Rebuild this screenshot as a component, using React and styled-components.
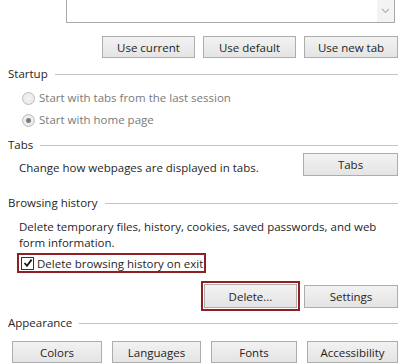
import React from 'react';
import styled, { createGlobalStyle } from 'styled-components';

const GlobalStyle = createGlobalStyle`
  html, body {
    margin: 0;
    padding: 0;
    background: #ffffff;
  }
  body {
    font-family: "Open Sans", "Noto Sans", "Liberation Sans", sans-serif;
    font-size: 11.5px;
    color: #1f1f1f;
  }
`;

const Page = styled.div`
  width: 411px;
  height: 363px;
  overflow: hidden;
  box-sizing: border-box;
  padding: 0 13px 0 8px;
  display: flex;
  flex-direction: column;
`;

const HomeBox = styled.div`
  margin-left: 58px;
  margin-right: 3px;
  height: 23px;
  box-sizing: border-box;
  border: 1px solid #a9a9a9;
  border-top: none;
  display: flex;
  justify-content: flex-end;
`;

const ScrollTrack = styled.div`
  width: 17px;
  background: #f3f3f3;
  display: flex;
  align-items: center;
  justify-content: center;
  color: #b8b8b8;
`;

const Row = styled.div`
  display: flex;
  align-items: ${(p) => p.$align || 'center'};
  justify-content: ${(p) => p.$justify || 'flex-end'};
  gap: ${(p) => p.$gap || 8}px;
  margin-top: ${(p) => p.$mt || 0}px;
  padding-left: ${(p) => p.$pl || 0}px;
`;

const Button = styled.button`
  font: inherit;
  color: #1f1f1f;
  width: ${(p) => p.$w || 93}px;
  height: ${(p) => p.$h || 22}px;
  padding: 0;
  box-sizing: border-box;
  border: 1px solid #adadad;
  border-radius: 0;
  background: linear-gradient(#f2f2f2, #e4e4e4);
  text-align: center;
`;

const Highlight = styled.div`
  border: 2px solid #8e2024;
  padding: ${(p) => p.$pad || '1px'};
  display: flex;
  align-items: center;
`;

const Header = styled.div`
  display: flex;
  align-items: center;
  gap: 7px;
  height: 16px;
  line-height: 16px;
  margin-top: ${(p) => p.$mt || 0}px;
  color: #262626;
`;

const HeaderLine = styled.div`
  flex: 1;
  height: 1px;
  background: #c4c4c4;
`;

const RadioRow = styled.label`
  display: flex;
  align-items: center;
  gap: 4px;
  height: 16px;
  line-height: 16px;
  margin-top: ${(p) => p.$mt || 0}px;
  padding-left: 14px;
  color: #7a7a7a;
`;

const RadioCircle = styled.span`
  width: 11px;
  height: 11px;
  border-radius: 50%;
  border: 1px solid #bcbcbc;
  background: radial-gradient(circle, #f4f4f4, #e6e6e6);
  display: flex;
  align-items: center;
  justify-content: center;

  &::after {
    content: '';
    display: ${(p) => (p.$checked ? 'block' : 'none')};
    width: 5px;
    height: 5px;
    border-radius: 50%;
    background: #7d7d7d;
  }
`;

const Text = styled.div`
  padding-left: 11px;
  line-height: 16px;
  margin-top: ${(p) => p.$mt || 0}px;
  flex: ${(p) => (p.$grow ? 1 : 'none')};
`;

const CheckWrap = styled.div`
  margin-left: 9px;
  align-self: flex-start;
  margin-top: 2px;
  border: 2px solid #8e2024;
  height: 20px;
  box-sizing: border-box;
  width: 189px;
  display: flex;
  align-items: center;
  gap: 3px;
  padding-left: 2px;
`;

const CheckBox = styled.span`
  width: 11px;
  height: 11px;
  border: 1px solid #333;
  background: #fff;
  display: flex;
  align-items: center;
  justify-content: center;
`;

const Grid = styled.div`
  display: grid;
  grid-template-columns: 90px 89px 86px 91px;
  gap: 10px;
  justify-content: end;
  margin-top: 10px;
`;

export default function App() {
  return (
    <>
      <GlobalStyle />
      <Page>
        <HomeBox>
          <ScrollTrack>
            <svg width="9" height="6" viewBox="0 0 9 6">
              <path d="M1 1 L4.5 4.5 L8 1" fill="none" stroke="#b4b4b4" strokeWidth="1.2" />
            </svg>
          </ScrollTrack>
        </HomeBox>

        <Row $mt={13} $gap={8}>
          <Button>Use current</Button>
          <Button>Use default</Button>
          <Button $w={94}>Use new tab</Button>
        </Row>

        <Header $mt={8}>
          Startup
          <HeaderLine />
        </Header>
        <RadioRow $mt={8}>
          <RadioCircle />
          Start with tabs from the last session
        </RadioRow>
        <RadioRow $mt={6}>
          <RadioCircle $checked />
          Start with home page
        </RadioRow>

        <Header $mt={9}>
          Tabs
          <HeaderLine />
        </Header>
        <Row $justify="space-between">
          <Text style={{ paddingTop: 6 }}>Change how webpages are displayed in tabs.</Text>
          <Button $w={95} $h={23}>Tabs</Button>
        </Row>

        <Header $mt={19}>
          Browsing history
          <HeaderLine />
        </Header>
        <Text $mt={8}>
          Delete temporary files, history, cookies, saved passwords, and web
          <br />
          form information.
        </Text>
        <CheckWrap>
          <CheckBox>
            <svg width="10" height="10" viewBox="0 0 10 10">
              <path d="M1.5 5 L4 7.8 L8.6 1.6" fill="none" stroke="#1a1a1a" strokeWidth="1.8" />
            </svg>
          </CheckBox>
          Delete browsing history on exit
        </CheckWrap>
        <Row $mt={8} $gap={4}>
          <Highlight>
            <Button $h={24}>Delete...</Button>
          </Highlight>
          <Button $w={94} $h={23}>Settings</Button>
        </Row>

        <Header $mt={4}>
          Appearance
          <HeaderLine />
        </Header>
        <Grid>
          <Button $w={90}>Colors</Button>
          <Button $w={89}>Languages</Button>
          <Button $w={86}>Fonts</Button>
          <Button $w={91}>Accessibility</Button>
        </Grid>
      </Page>
    </>
  );
}
